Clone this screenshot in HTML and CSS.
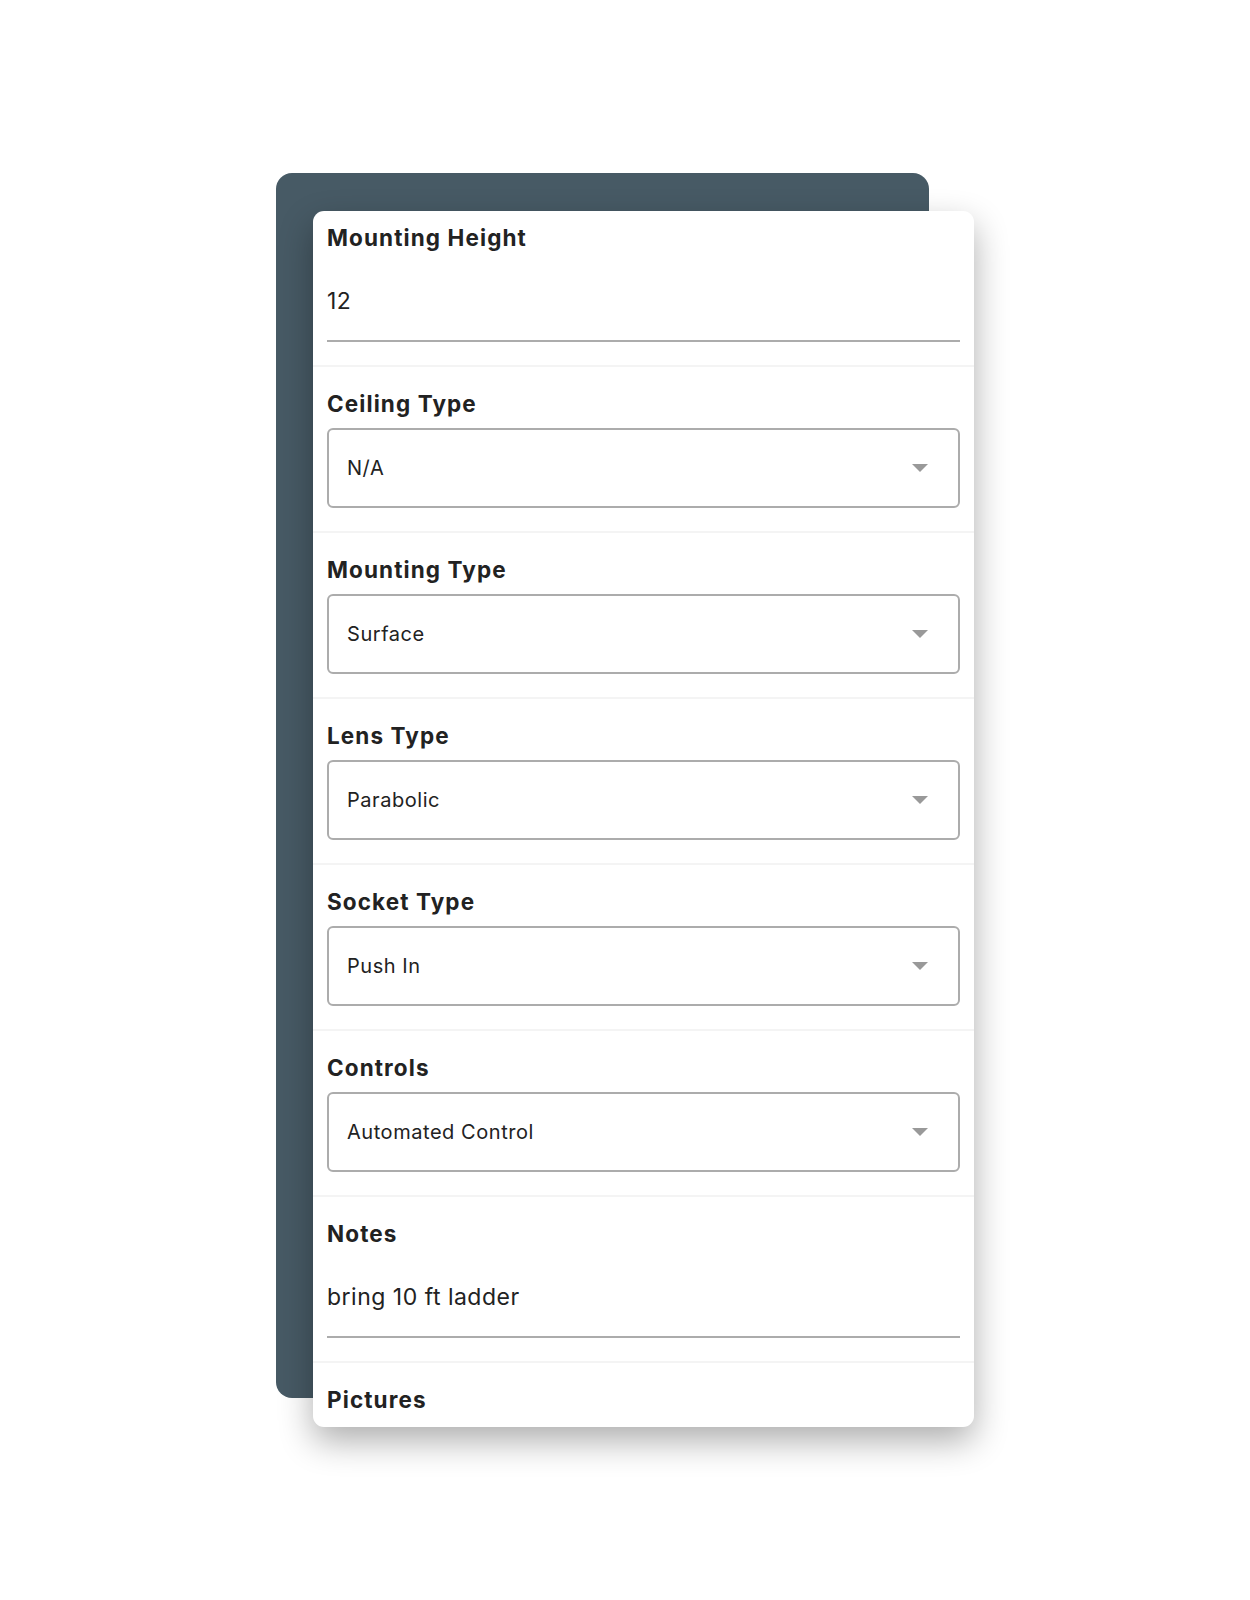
FILE: index.html
```html
<!DOCTYPE html>
<html>
    <head>
        <link rel="stylesheet" href="styles.css">
    </head>
    <body>
        <div class="stage">
            <div class="backdrop">
                <div class="sheet">
                    <div class="scroller">
                        <div class="field">
                            <div class="label">Mounting Height</div>
                            <div class="text-input">12</div>
                        </div>

                        <div class="field">
                            <div class="label">Ceiling Type</div>
                            <div class="select">
                                <span>N/A</span>
                                <span class="caret"></span>
                            </div>
                        </div>

                        <div class="field">
                            <div class="label">Mounting Type</div>
                            <div class="select">
                                <span>Surface</span>
                                <span class="caret"></span>
                            </div>
                        </div>

                        <div class="field">
                            <div class="label">Lens Type</div>
                            <div class="select">
                                <span>Parabolic</span>
                                <span class="caret"></span>
                            </div>
                        </div>

                        <div class="field">
                            <div class="label">Socket Type</div>
                            <div class="select">
                                <span>Push In</span>
                                <span class="caret"></span>
                            </div>
                        </div>

                        <div class="field">
                            <div class="label">Controls</div>
                            <div class="select">
                                <span>Automated Control</span>
                                <span class="caret"></span>
                            </div>
                        </div>

                        <div class="field">
                            <div class="label">Notes</div>
                            <div class="text-input">bring 10 ft ladder</div>
                        </div>

                        <div class="field">
                            <div class="label">Pictures</div>
                        </div>
                    </div>
                </div>
            </div>
        </div>
    </body>
</html>
```

FILE: styles.css
```css
body {
    font-family: Inter, "Noto Sans", sans-serif;
    margin: 0;
    padding: 0;
    color: #222;
    background: #fff;
}

.stage {
    padding: 173px 0 200px 276px;
}

.backdrop {
    width: 653px;
    height: 1225px;
    padding: 38px 0 0 37px;
    box-sizing: border-box;
    background-color: #475a65;
    border-radius: 16px;
}

.sheet {
    width: 661px;
    height: 1216px;
    background: #fff;
    border-radius: 11px;
    overflow: hidden;
    box-shadow: 0 14px 34px rgba(0, 0, 0, 0.32);
}

.scroller {
    margin-top: -10px;
}

.field {
    padding: 23px 14px 23px 14px;
    border-bottom: 2px solid #f4f4f4;
}

.label {
    font-size: 22.5px;
    line-height: 28px;
    font-weight: 700;
    letter-spacing: 1.1px;
    color: #222;
}

.text-input {
    margin-top: 10px;
    height: 78px;
    border-bottom: 2px solid #acacac;
    display: flex;
    align-items: center;
    font-size: 23px;
    letter-spacing: 0.5px;
    color: #222;
}

.select {
    margin-top: 10px;
    height: 76px;
    border: 2px solid #acacac;
    border-radius: 6px;
    display: flex;
    align-items: center;
    justify-content: space-between;
    padding: 0 30px 0 18px;
    font-size: 20px;
    letter-spacing: 0.55px;
    color: #222;
}

.caret {
    width: 0;
    height: 0;
    border-left: 8px solid transparent;
    border-right: 8px solid transparent;
    border-top: 8px solid #999;
}
```
